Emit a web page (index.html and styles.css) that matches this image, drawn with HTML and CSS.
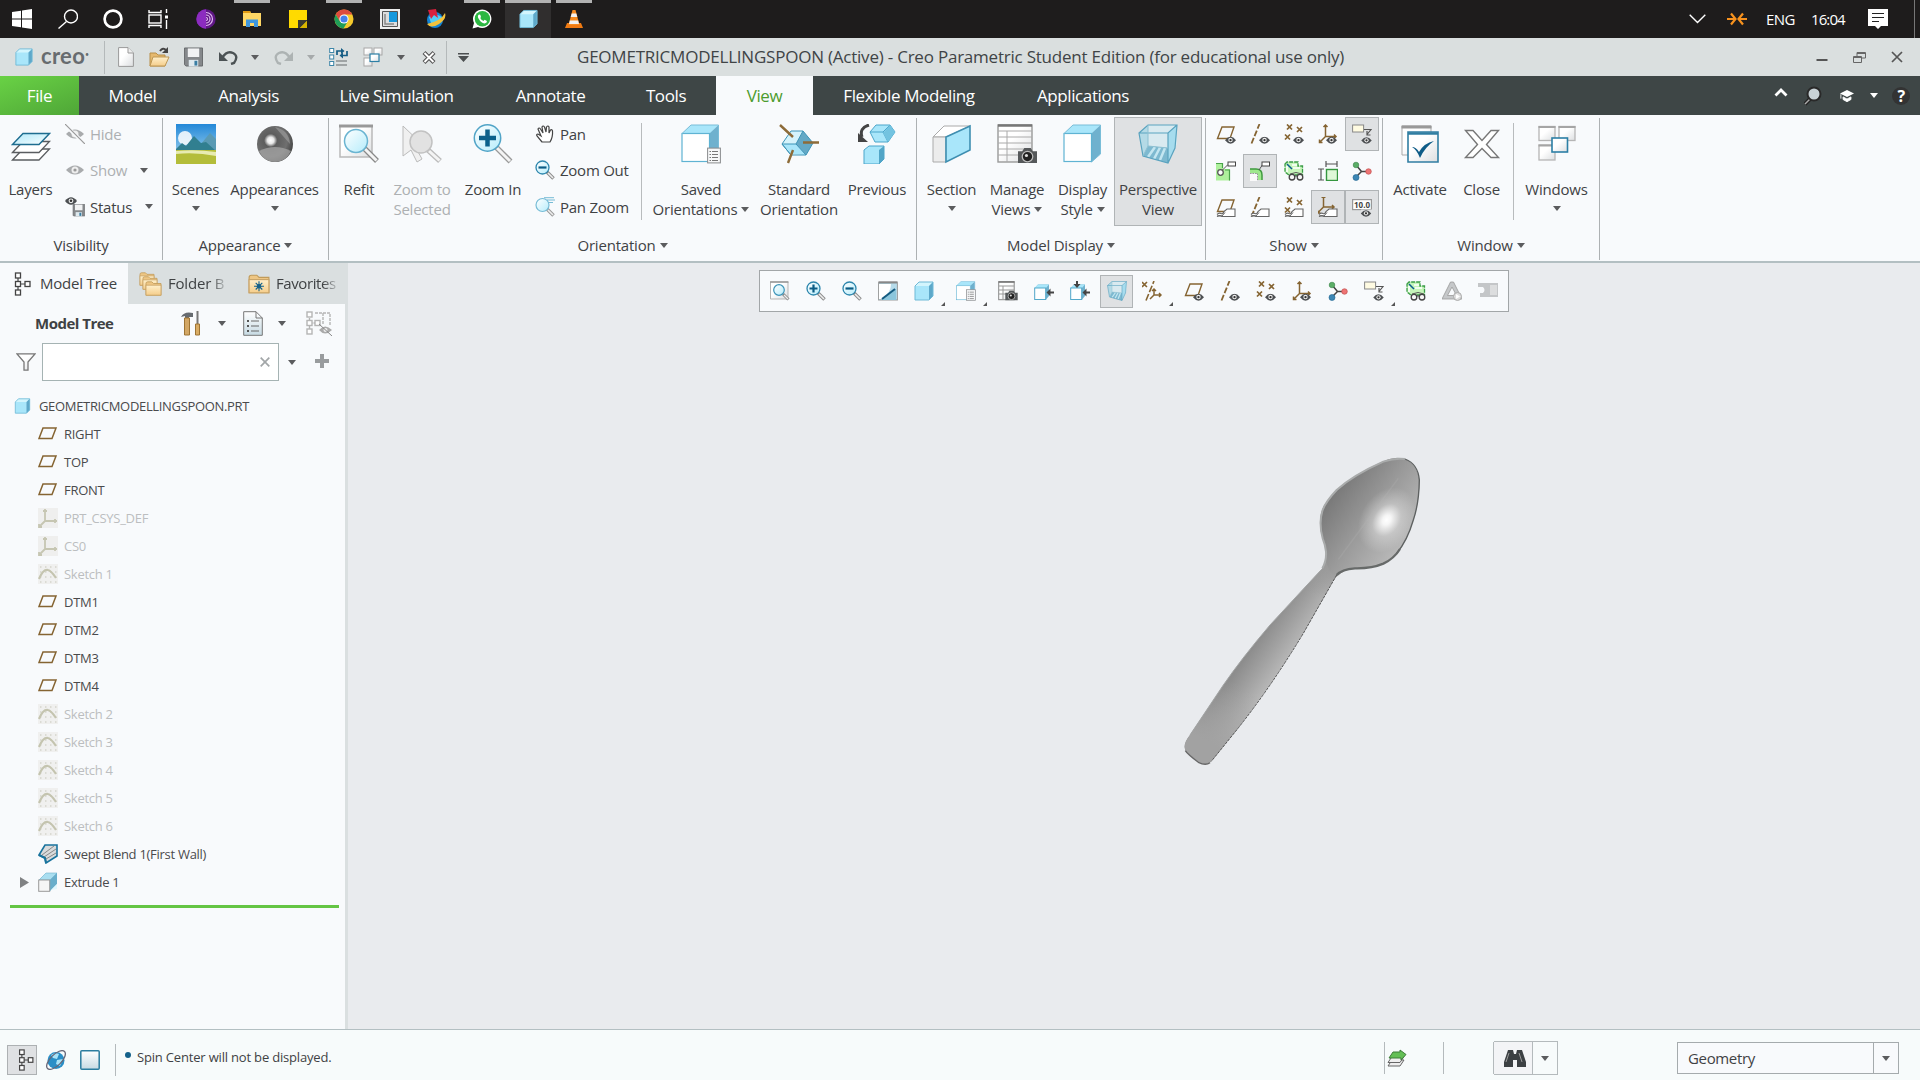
FILE: index.html
```
<!DOCTYPE html>
<html lang="en">
<head>
<meta charset="utf-8">
<title>Creo Parametric</title>
<link rel="stylesheet" href="styles.css">
</head>
<body>
<svg class="sprite" aria-hidden="true">
<defs>
<linearGradient id="gPaper" x1="0" y1="0" x2="1" y2="1"><stop offset=".4" stop-color="#fff"/><stop offset="1" stop-color="#dcdee0"/></linearGradient>
<linearGradient id="gLens" x1="0" y1="0" x2="1" y2="1"><stop offset="0" stop-color="#fff"/><stop offset="1" stop-color="#b5ecfb"/></linearGradient>
<linearGradient id="gSky" x1="0" y1="0" x2="0" y2="1"><stop offset="0" stop-color="#2388d8"/><stop offset="1" stop-color="#b9e2f3"/></linearGradient>
<linearGradient id="gGold" x1="0" y1="0" x2="0" y2="1"><stop offset="0" stop-color="#fff0cc"/><stop offset="1" stop-color="#f5cd8a"/></linearGradient>
<linearGradient id="gSq" x1="0" y1="0" x2="0" y2="1"><stop offset="0" stop-color="#fff"/><stop offset="1" stop-color="#c7dae3"/></linearGradient>
<radialGradient id="gBall" cx=".38" cy=".4" r=".65"><stop offset="0" stop-color="#fff"/><stop offset=".14" stop-color="#e8e8e8"/><stop offset=".28" stop-color="#5d5d5d"/><stop offset=".7" stop-color="#6f6f6f"/><stop offset="1" stop-color="#444"/></radialGradient>
<linearGradient id="gFlow" x1="0" y1="0" x2="1" y2="1"><stop offset="0" stop-color="#b4e9f9"/><stop offset=".5" stop-color="#d4f3fc"/><stop offset="1" stop-color="#fff"/></linearGradient>

<symbol id="eye" viewBox="0 0 12 8"><path d="M0 4Q6-3.500 12 4Q6 11.500 0 4Z" fill="#4c4f52"/><circle cx="6" cy="3.800" r="2.400" fill="#eee"/><circle cx="6" cy="3.800" r="1.300" fill="#333"/></symbol>
<symbol id="tag" viewBox="0 0 20 10"><path d="M1 7Q3 5 5 6T8 4L11 1.500H19V9H6Q4 7 1 9" fill="#fff" stroke="#666" stroke-width="1.100"/><path d="M1 8.500H6L9 5" fill="none" stroke="#666" stroke-width="1"/></symbol>
<symbol id="cube" viewBox="0 0 20 20"><path d="M1 5L5 1H19V15L15 19H1Z" fill="#a9e6fa"/><path d="M1 5L5 1H19L15 5Z" fill="#d3f5fd"/><path d="M15 5L19 1V15L15 19Z" fill="#5ea8c9"/><path d="M1 5L5 1H19V15L15 19H1Z" fill="none" stroke="#6fb9d6"/></symbol>
<symbol id="mag" viewBox="0 0 20 20"><path d="M12 12L18.500 18.500" stroke="#8b8b8b" stroke-width="3.600"/><path d="M13 13L18 18" stroke="#eee" stroke-width="1.600"/><circle cx="7.500" cy="7.500" r="6.500" fill="url(#gLens)" stroke="#2d86ad" stroke-width="1.300"/></symbol>
<symbol id="zin" viewBox="0 0 20 20"><use href="#mag"/><path d="M3.500 7.500H11.500M7.500 3.500V11.500" stroke="#0b5c85" stroke-width="2.200"/></symbol>
<symbol id="zout" viewBox="0 0 20 20"><use href="#mag"/><path d="M3.500 7.500H11.500" stroke="#0b5c85" stroke-width="2.200"/></symbol>
<symbol id="refit" viewBox="0 0 20 20"><path d="M.5 1H18V18H.5Z" fill="url(#gPaper)" stroke="#b5b5b5"/><path d="M0 1H18.500" stroke="#999" stroke-width="1.500"/><path d="M13 13L18.500 18.500" stroke="#8b8b8b" stroke-width="3"/><path d="M14 14L18 18" stroke="#eee" stroke-width="1.200"/><circle cx="9" cy="9" r="5.300" fill="url(#gLens)" stroke="#3c94b8" stroke-width="1.200"/></symbol>
<symbol id="plane" viewBox="0 0 20 20"><path d="M1 14.500L5 4H18L14 14.500Z" fill="none" stroke="#856432" stroke-width="1.500"/></symbol>
<symbol id="pl" viewBox="0 0 20 20"><path d="M1.500 14.500L6 3H18L14 14.500Z" fill="none" stroke="#856432" stroke-width="1.400"/></symbol>
<symbol id="ax" viewBox="0 0 20 20"><path d="M1.500 19.500L9.500 0" stroke="#856432" stroke-width="1.800" stroke-dasharray="6 2"/></symbol>
<symbol id="pts" viewBox="0 0 20 20"><path d="M3 .5L8 5.500M8 .5L3 5.500M13 3L18 8M18 3L13 8M1 10.500L6 15.500M6 10.500L1 15.500" stroke="#856432" stroke-width="1.700"/></symbol>
<symbol id="cs" viewBox="0 0 20 20"><path d="M7.500 1V12.500H18M7.500 12.500L1.500 18.500M5.500 3L7.500 1L9.500 3M16 10.500L18 12.500L16 14.500M1.500 15.500V18.500H4.500" fill="none" stroke="#856432" stroke-width="1.500"/></symbol>
<symbol id="pl-e" viewBox="0 0 20 20"><use href="#pl"/><use href="#eye" x="9" y="12.500" width="11" height="7.500"/></symbol>
<symbol id="ax-e" viewBox="0 0 20 20"><use href="#ax"/><use href="#eye" x="9" y="12.500" width="11" height="7.500"/></symbol>
<symbol id="pts-e" viewBox="0 0 20 20"><use href="#pts"/><use href="#eye" x="9" y="12.500" width="11" height="7.500"/></symbol>
<symbol id="cs-e" viewBox="0 0 20 20"><use href="#cs"/><use href="#eye" x="8" y="12.500" width="11" height="7.500"/></symbol>
<symbol id="an-e" viewBox="0 0 20 20"><rect x=".6" y="1" width="11" height="7" fill="#fffbe2" stroke="#888"/><path d="M12 5.500H19L15 10.500M15 7V11H18.500" fill="none" stroke="#555" stroke-width="1.200"/><use href="#eye" x="9" y="13" width="11" height="7"/></symbol>
<symbol id="pl-t" viewBox="0 0 20 20"><use href="#pl"/><use href="#tag" x="0" y="10.500" width="20" height="10"/></symbol>
<symbol id="ax-t" viewBox="0 0 20 20"><use href="#ax"/><use href="#tag" x="0" y="10.500" width="20" height="10"/></symbol>
<symbol id="pts-t" viewBox="0 0 20 20"><use href="#pts"/><use href="#tag" x="0" y="10.500" width="20" height="10"/></symbol>
<symbol id="cs-t" viewBox="0 0 20 20"><use href="#cs" x="-2" y="-2.500"/><use href="#tag" x="0" y="10.500" width="20" height="10"/></symbol>
<symbol id="num" viewBox="0 0 20 20"><rect x=".6" y="2.600" width="18.800" height="10" fill="#fff" stroke="#999" stroke-width="1.200"/><text x="10" y="10.800" text-anchor="middle" font-size="8" font-weight="700" font-family="Open Sans, sans-serif" fill="#444">10.0</text><rect x="9" y="12.500" width="11" height="7.500" fill="#dfe1e3"/><use href="#eye" x="8.500" y="13" width="11" height="7"/></symbol>
<symbol id="gnote" viewBox="0 0 20 20"><path d="M0 2H7V8H14V19.500H0Z" fill="#aef09c"/><path d="M0 2.500H6.500V7M9 9H13.500V19.500" fill="none" stroke="#4aa34a" stroke-width="1.200"/><circle cx="4.500" cy="11.500" r="2.800" fill="#fff" stroke="#555" stroke-width="1.300"/><path d="M6.500 9L12 3.500" stroke="#555"/><rect x="12" y="1" width="7.500" height="4" fill="#fff" stroke="#444"/></symbol>
<symbol id="gsurf" viewBox="0 0 20 20"><path d="M0 8H6Q12 8 12 14V19H8V14H5V12H0Z" fill="#9ee88c"/><path d="M0 8H6Q12 8 12 14V19" fill="none" stroke="#3f9a3f" stroke-width="1.500"/><rect x="0" y="13" width="7" height="7" fill="#fafafa"/><path d="M0 12.500H7.500V20" fill="none" stroke="#999" stroke-dasharray="1.500 1"/><path d="M9 9L13 3" stroke="#555"/><rect x="12" y="1" width="7.500" height="4" fill="#fff" stroke="#444"/></symbol>
<symbol id="glass" viewBox="0 0 20 20"><path d="M1 3L3 1H14V5H18.500V14H5L1 11Z" fill="#c6f5ba" stroke="#3a9c46" stroke-width="1.300" stroke-dasharray="4 1"/><path d="M8 4H13M9 7H16M3 5V11" stroke="#fff" stroke-width="1.500"/><path d="M3 3L8 8" stroke="#0c5d8e" stroke-width="1.500"/><path d="M6 13Q12 10 18 13" fill="none" stroke="#555"/><circle cx="8" cy="16.200" r="2.800" fill="#f8f8f8" stroke="#444" stroke-width="1.300"/><circle cx="16" cy="16.200" r="2.800" fill="#f8f8f8" stroke="#444" stroke-width="1.300"/><path d="M10.500 15H13.500" stroke="#444"/></symbol>
<symbol id="dimn" viewBox="0 0 20 20"><rect x="8.500" y="8.500" width="11" height="11" fill="#dff8d8" stroke="#35963f" stroke-width="1.400"/><path d="M8 3H19M8 0V6M19 0V6M3 8V19M0 8H6M0 19H6" stroke="#555" stroke-width="1.200"/></symbol>
<symbol id="spin" viewBox="0 0 20 20"><path d="M4 4L9.500 10.500H16M9.500 10.500L4 16" fill="none" stroke="#444" stroke-width="1.500"/><circle cx="4" cy="4" r="2.800" fill="#5cae68" stroke="#388246" stroke-width=".6"/><circle cx="16.500" cy="10.500" r="2.800" fill="#ee7474" stroke="#b94444" stroke-width=".6"/><circle cx="4" cy="16.500" r="3" fill="#3d87b5" stroke="#1c638f" stroke-width=".6"/></symbol>
<symbol id="persp" viewBox="0 0 40 40"><path d="M1 9L10 1H39L30 9Z" fill="#d3e9ef"/><path d="M1 9L10 1V22L5 32Z" fill="#b4dae6"/><path d="M10 1H39V21L30 24L10 22Z" fill="#d9eaf0"/><path d="M30 9L39 1L37 24L30 39Z" fill="#a6dcee"/><path d="M5 32L10 22L30 24V39Z" fill="#7db9d0"/><path d="M10 33L17 23M16 35L22 23.500M22 36L27 24" stroke="#c3e6f1" stroke-width="2.500"/><path d="M1 9L10 1H39L37 24L30 39L5 32ZM1 9H30L39 1M30 9V39" fill="none" stroke="#5aa3bf" stroke-width="1.200"/><path d="M10 1V22L5 32M10 22L30 24" fill="none" stroke="#8cc0d2"/></symbol>
<symbol id="cam" viewBox="0 0 18 16"><path d="M0 4H4L6 1H12L14 4H18V15H0Z" fill="#55585a"/><circle cx="9" cy="9" r="5" fill="#222" stroke="#bbb" stroke-width="1.200"/><circle cx="8" cy="8" r="1.500" fill="#ddd"/></symbol>
<symbol id="table" viewBox="0 0 36 40"><rect x="1" y="1" width="34" height="37" fill="url(#gPaper)" stroke="#999" stroke-width="1.400"/><path d="M1 1.500H35" stroke="#777" stroke-width="2.400"/><path d="M1 7H35M1 13H35M1 19H35M1 25H35M1 31H35M10 7V38" stroke="#aaa"/></symbol>
<symbol id="tablecam" viewBox="0 0 40 40"><use href="#table" width="36" height="40"/><use href="#cam" x="21" y="23" width="19" height="17"/></symbol>
<symbol id="tablecam-s" viewBox="0 0 20 20"><rect x=".7" y=".7" width="15.500" height="18" fill="url(#gPaper)" stroke="#888"/><path d="M.5 1H16.500" stroke="#777" stroke-width="1.600"/><path d="M1 5H16M1 9H16M1 13H16M5 5V18" stroke="#999"/><use href="#cam" x="7" y="9" width="13" height="11"/></symbol>
<symbol id="box" viewBox="0 0 40 40"><path d="M1 9.500L10 1H37.500L29 9.500Z" fill="#a9e6fa"/><path d="M28.500 9.500L37.500 1V30L28.500 38Z" fill="#6fb1ce"/><rect x="1" y="9.500" width="27.500" height="28" fill="#fff" stroke="#5fb3d3" stroke-width="1.200"/><path d="M1 9.500L10 1H37.500V30L28.500 38" fill="none" stroke="#79bdd8"/></symbol>
<symbol id="list" viewBox="0 0 14 16"><rect x=".6" y=".6" width="12.800" height="14.800" fill="#f6f7f8" stroke="#8a8c8e"/><path d="M2.500 4H11.500M2.500 7H11.500M2.500 10H11.500M2.500 13H11.500" stroke="#777" stroke-dasharray="1.500 1 6 1"/></symbol>
<symbol id="saved" viewBox="0 0 40 40"><use href="#box"/><use href="#list" x="26" y="23" width="14" height="17"/></symbol>
<symbol id="win" viewBox="0 0 20 20"><rect x="1" y="1" width="8" height="7" fill="url(#gPaper)" stroke="#a8a8a8"/><rect x="11" y="1" width="8" height="7" fill="url(#gPaper)" stroke="#a8a8a8"/><rect x="1" y="11" width="8" height="8" fill="url(#gPaper)" stroke="#a8a8a8"/><rect x="7" y="7" width="9" height="7.500" fill="url(#gPaper)" stroke="#2c7fa5" stroke-width="1.200"/></symbol>
<symbol id="floppy" viewBox="0 0 20 20"><path d="M.5 .5H19.500V19.500H2L.5 18Z" fill="#85888b" stroke="#66696b"/><rect x="4" y="1" width="12" height="9" fill="#f1f2f3"/><rect x="5" y="13" width="10" height="7" fill="#dfe9ee"/><rect x="11" y="14" width="3" height="5" fill="#3a7ea3"/></symbol>
<symbol id="tree" viewBox="0 0 16 24"><path d="M3.500 3V21M3.500 12H13" stroke="#444" stroke-width="1.200"/><g fill="#fff" stroke="#444" stroke-width="1.300"><rect x="1" y="1" width="5" height="5"/><rect x="1" y="9.500" width="5" height="5"/><rect x="1" y="18" width="5" height="5"/><rect x="10.500" y="9.500" width="5" height="5"/></g></symbol>
<symbol id="sketch" viewBox="0 0 20 20"><rect width="20" height="20" fill="#f0f0ef"/><path d="M2 3H20M2 8H20M2 13H20M2 18H20" stroke="#d4d4cc" stroke-width="1.500" stroke-dasharray="1.500 3.500"/><path d="M1 15Q5 5 10 6Q13 6.500 18 14" fill="none" stroke="#c4c4af" stroke-width="2.200"/></symbol>
<symbol id="csg" viewBox="0 0 20 20"><rect width="20" height="20" fill="#efefee"/><path d="M7 1V13H19M7 13L1.500 18.500M5 3H9M17 11V15M1 16V19H4" fill="none" stroke="#c6c6b2" stroke-width="1.800"/></symbol>
<symbol id="folder" viewBox="0 0 20 18"><path d="M1 3Q1 1 3 1H8L10 3H19V17H1Z" fill="#eec684" stroke="#c19b5a"/><rect x="1" y="5" width="18" height="12" fill="url(#gGold)" stroke="#c9a467"/></symbol>
<symbol id="caret" viewBox="0 0 8 5"><path d="M0 0H8L4 5Z" fill="#5b5c5e"/></symbol>
<symbol id="corner" viewBox="0 0 4 4"><path d="M4 0V4H0Z" fill="#555"/></symbol>
<symbol id="boxarrow" viewBox="0 0 20 20"><path d="M.7 7L4 3.500H15V15L12 18.500H.7Z" fill="#6fb1ce"/><path d="M.7 7L4 3.500H15L12 7Z" fill="#a9e6fa"/><rect x=".7" y="7" width="11" height="11.500" fill="#fff" stroke="#55a9ca"/><path d="M20 11.500H14" stroke="#444" stroke-width="2"/><path d="M12.500 11.500L16.500 7.500V15.500Z" fill="#444"/></symbol>
</defs>
</svg>

<header class="taskbar">
  <div class="tb sys"><svg width="20" height="20" viewBox="0 0 20 20"><path d="M0 3L9 1.700V9.500H0ZM10 1.500L20 0V9.500H10ZM0 10.500H9V18.300L0 17ZM10 10.500H20V20L10 18.500Z" fill="#fff"/></svg></div>
  <div class="tb sys"><svg width="20" height="20" viewBox="0 0 20 20" fill="none" stroke="#fff" stroke-width="1.400"><circle cx="13" cy="7.500" r="6.500"/><path d="M8.500 12.500L.5 19.500"/></svg></div>
  <div class="tb sys"><svg width="20" height="20" viewBox="0 0 20 20"><circle cx="10" cy="10" r="8.400" fill="none" stroke="#fff" stroke-width="2.700"/></svg></div>
  <div class="tb sys last"><svg width="20" height="20" viewBox="0 0 20 20" fill="none" stroke="#fff" stroke-width="1.400"><path d="M1 1V3.500H13V1M1 19V16.500H13V19"/><rect x="1" y="6" width="12" height="8"/><path d="M18.500 0V4M18.500 11V20"/><path d="M17 8H20" stroke-width="3"/></svg></div>
  <div class="tb"><svg width="20" height="20" viewBox="0 0 20 20"><circle cx="10" cy="10" r="9.700" fill="#5f1785"/><path d="M10 .3A9.700 9.700 0 0 0 10 19.700Z" fill="#8c2cc0"/><path d="M10 3.500A6.500 6.500 0 0 1 10 16.500M10 6A4 4 0 0 1 10 14M10 8.500A1.500 1.500 0 0 1 10 11.500" fill="none" stroke="#e2b9f2" stroke-width="1.200"/></svg></div>
  <div class="tb open"><svg width="20" height="20" viewBox="0 0 20 20"><path d="M1 2H8L9 4H19V17H1Z" fill="#ffd765"/><path d="M1 2H8L9 4H1Z" fill="#e19b14"/><path d="M4 18V10.500H16V18H12V14H8V18Z" fill="#3f97dd"/></svg></div>
  <div class="tb"><svg width="20" height="20" viewBox="0 0 20 20"><path d="M1 1H19V19H1Z" fill="#ffda00"/><path d="M10 19V11H19V12L12 19Z" fill="#3a3a30"/><path d="M19 12L12 19H19Z" fill="#d7b400"/></svg></div>
  <div class="tb open"><svg width="20" height="20" viewBox="0 0 20 20"><circle cx="10" cy="10" r="9.500" fill="#f5c92c"/><path d="M1.700 5.400A9.500 9.500 0 0 1 18.300 5.400H10L6 12.500Z" fill="#dd4b3e"/><path d="M1.700 5.400A9.500 9.500 0 0 0 9.500 19.500L13.700 12.500H6Z" fill="#1f9d58"/><circle cx="10" cy="10" r="4.600" fill="#fff"/><circle cx="10" cy="10" r="3.600" fill="#4580ea"/></svg></div>
  <div class="tb"><svg width="20" height="20" viewBox="0 0 20 20"><path d="M0 0H20V20H0Z" fill="#eee"/><path d="M2.500 2.500H17.500V17.500H2.500Z" fill="#ddd" stroke="#555"/><path d="M9 3H17V13H9Z" fill="#1598dd"/><path d="M5 5V15H14" fill="none" stroke="#888" stroke-width="1.500"/></svg></div>
  <div class="tb"><svg width="20" height="20" viewBox="0 0 20 20"><circle cx="9" cy="11" r="8" fill="#1283d6"/><path d="M3 8Q9 3 16 8L13 13L6 17Z" fill="#55cdf5"/><path d="M1 15Q5 20 13 15T19 4Q15 12 1 15" fill="#f2c23c"/><path d="M2 1L10 0L12 9L8 6L5 10Z" fill="#d9203e"/></svg></div>
  <div class="tb open"><svg width="20" height="20" viewBox="0 0 20 20"><path d="M.5 19.500L2 14A9.200 9.200 0 1 1 6 18Z" fill="#fff"/><circle cx="10.400" cy="9.800" r="7.700" fill="#2cb742"/><path d="M7 5.500Q5 7 6.500 9.500Q9 14 12.500 14.500Q15 14 15 12L12.500 10.800L11.500 12Q9 11 8.300 9L9 8L8.300 5.700Z" fill="#fff"/></svg></div>
  <div class="tb active"><svg width="19" height="20"><use href="#cube"/></svg></div>
  <div class="tb open"><svg width="20" height="20" viewBox="0 0 20 20"><path d="M3 14H17L19 19H1Z" fill="#f07a12"/><path d="M8.500 1H11.500L15.500 16H4.500Z" fill="#f58a1f"/><path d="M7.700 4.500H12.300L13.300 8H6.700ZM5.800 11.500H14.200L15 15H5Z" fill="#f1f1f1"/></svg></div>
  <div class="tray">
    <svg width="17" height="10" viewBox="0 0 17 10"><path d="M.7 .7L8.500 8.500L16.300 .7" fill="none" stroke="#fff" stroke-width="1.400"/></svg>
    <svg class="orange" width="20" height="14" viewBox="0 0 20 14"><path d="M0 7H7M13 7H20M4 1.500L8.500 7L4 12.500M16 1.500L11.500 7L16 12.500" fill="none" stroke="#f7921e" stroke-width="2.200"/></svg>
    <span class="lang">ENG</span><span class="clock">16:04</span>
    <svg class="note" width="20" height="20" viewBox="0 0 20 20"><path d="M0 0H20V17H13L10 20L7 17H0Z" fill="#fff"/><path d="M4 4.500H16M4 8.500H16M4 12.500H11" stroke="#222" stroke-width="1.200"/></svg>
  </div>
</header>

<div class="titlebar">
  <svg width="18" height="20"><use href="#cube"/></svg>
  <span class="brand">creo<i>•</i></span>
  <span class="sep"></span>
  <svg class="n" width="16" height="20" viewBox="0 0 16 20"><path d="M.6 .6H10L15.400 6V19.400H.6Z" fill="url(#gPaper)" stroke="#999"/><path d="M10 .6V6H15.400" fill="#eee" stroke="#999"/></svg>
  <svg width="21" height="20" viewBox="0 0 21 20"><path d="M1 6H7L9 8H16V19H1Z" fill="#e5b96f" stroke="#b98f49"/><path d="M4 10H20L16 19H1Z" fill="url(#gGold)" stroke="#bd9754"/><path d="M11 4Q14 0 17 3" fill="none" stroke="#444" stroke-width="2"/><path d="M19 0V6H13Z" fill="#444"/></svg>
  <svg width="19" height="20"><use href="#floppy"/></svg>
  <svg width="20" height="16" viewBox="0 0 20 16"><path d="M4 9Q9 1 15 4T16 14L13 15" fill="none" stroke="#4b5254" stroke-width="2.400"/><path d="M1 3V12H10Z" fill="#4b5254"/></svg>
  <svg width="8" height="5"><use href="#caret"/></svg>
  <svg width="20" height="16" viewBox="0 0 20 16"><path d="M16 9Q11 1 5 4T4 14L7 15" fill="none" stroke="#adb3b3" stroke-width="2.400"/><path d="M19 3V12H10Z" fill="#adb3b3"/></svg>
  <svg class="dim" width="8" height="5"><use href="#caret"/></svg>
  <svg width="20" height="20" viewBox="0 0 20 20"><g fill="#fff" stroke="#3d86a8"><rect x=".7" y="1.500" width="4" height="4"/><rect x=".7" y="8" width="4" height="4"/><rect x=".7" y="14.500" width="4" height="4"/></g><path d="M7 14H18M7 18H18" stroke="#8c9192" stroke-width="1.500"/><path d="M8 8V4H12M18 4V8.500H14" fill="none" stroke="#155d85" stroke-width="1.700"/><path d="M12 1L15.500 4L12 7ZM14 5.500L10.500 8.500L14 11.500Z" fill="#155d85"/></svg>
  <svg width="20" height="20"><use href="#win"/></svg>
  <svg width="8" height="5"><use href="#caret"/></svg>
  <svg class="n" width="14" height="13" viewBox="0 0 14 13"><path d="M2 1.500L12 11.500M12 1.500L2 11.500" stroke="#555" stroke-width="4.200"/><path d="M2.500 2L11.500 11M11.500 2L2.500 11" stroke="#fff" stroke-width="1.900"/></svg>
  <span class="sep"></span>
  <svg width="11" height="9" viewBox="0 0 11 9"><path d="M0 0H11V1.500H0ZM0 3H11L5.500 9Z" fill="#4b4f50"/></svg>
  <span class="title">GEOMETRICMODELLINGSPOON (Active) - Creo Parametric Student Edition (for educational use only)</span>
  <svg width="12" height="12" viewBox="0 0 12 12"><path d="M.5 9H11.500" stroke="#555" stroke-width="2"/></svg>
  <svg width="13" height="11" viewBox="0 0 13 11"><g fill="none" stroke="#666"><path d="M4 4V.5H12.500V6H9"/><path d="M.5 4.500H8.500V10.500H.5Z"/><path d="M4 1.500H12.500M.5 5.500H8.500"/></g></svg>
  <svg width="12" height="12" viewBox="0 0 12 12"><path d="M1 1L11 11M11 1L1 11" stroke="#555" stroke-width="1.700"/></svg>
</div>

<nav class="menu">
  <span class="file">File</span><span>Model</span><span>Analysis</span><span>Live Simulation</span><span>Annotate</span><span>Tools</span><span class="on">View</span><span>Flexible Modeling</span><span>Applications</span>
  <div class="mright">
    <svg width="14" height="9" viewBox="0 0 14 9"><path d="M1.500 7.500L7 2L12.500 7.500" fill="none" stroke="#fff" stroke-width="2.800"/></svg>
    <svg width="18" height="20" viewBox="0 0 18 20"><path d="M6 13L1 18" stroke="#222" stroke-width="4"/><path d="M6 13L1 18" stroke="#aaa" stroke-width="1.500"/><circle cx="10" cy="8" r="6.500" fill="#c8d2d6" stroke="#292929" stroke-width="2"/></svg>
    <svg width="16" height="14" viewBox="0 0 18 16"><path d="M9 1L17 5L9 9L1 5Z" fill="#fff"/><path d="M4.500 9L9 11.500L13.500 9V12L9 14.500L4.500 12ZM2 6V11" fill="#fff" stroke="#fff"/></svg>
    <svg class="white" width="8" height="5"><use href="#caret"/></svg>
    <span class="help">?</span>
  </div>
</nav>

<section class="ribbon">
  <div class="group g1"><div class="row">
    <div class="btn"><svg width="40" height="40" viewBox="0 0 40 40"><g fill="#fff" stroke="#5a5d60" stroke-width="1.300"><path d="M1.500 36L12 25H38.500L28 36Z"/><path d="M1.500 28.500L12 17.500H38.500L28 28.500Z"/></g><path d="M1.500 20.500L12 9.500H38.500L28 20.500Z" fill="url(#gFlow)" stroke="#1e6d90" stroke-width="1.400"/></svg><span>Layers</span></div>
    <div class="stack">
      <div class="off"><svg width="20" height="20" viewBox="0 0 20 20"><path d="M1 10Q10 1 19 10Q10 19 1 10Z" fill="#a9abad"/><circle cx="10" cy="10" r="3.500" fill="#eee"/><path d="M0 1L20 20" stroke="#f8fafc" stroke-width="3.500"/><path d="M0 0L20 20" stroke="#999" stroke-width="1.200"/></svg>Hide</div>
      <div class="off"><svg width="20" height="20" viewBox="0 0 20 20"><path d="M1 10Q10 1 19 10Q10 19 1 10Z" fill="#a9abad"/><circle cx="10" cy="10" r="3.500" fill="#eee"/><circle cx="10" cy="10" r="1.600" fill="#999"/></svg>Show<svg class="c far" width="8" height="5"><use href="#caret"/></svg></div>
      <div><svg width="20" height="20" viewBox="0 0 20 20"><use href="#eye" width="12" height="8"/><use href="#floppy" x="7.500" y="7" width="12.500" height="12.500"/></svg>Status<svg class="c far2" width="8" height="5"><use href="#caret"/></svg></div>
    </div></div><div class="gl">Visibility</div></div>
  <div class="group g2"><div class="row">
    <div class="btn"><svg width="40" height="40" viewBox="0 0 40 40"><rect width="40" height="40" fill="url(#gSky)"/><circle cx="9" cy="14" r="7" fill="#fff" opacity=".85"/><path d="M20 26L34 9L40 15V27Z" fill="#5a9ab4"/><path d="M0 25L6 19L10 22L18 12L25 19L30 18L40 27H0Z" fill="#317f90"/><rect y="26" width="40" height="14" fill="#b4bd3a"/><path d="M0 27Q20 25 40 28V32Q20 28 0 30Z" fill="#e7ebb2"/></svg><span>Scenes</span><svg class="c" width="8" height="5"><use href="#caret"/></svg></div>
    <div class="btn"><svg width="40" height="40" viewBox="0 0 40 40"><circle cx="20" cy="20" r="18" fill="url(#gBall)"/><path d="M4 27Q20 19 36 27Q31 38 20 38T4 27Z" fill="#a6a6a6" opacity=".75"/><path d="M20 3Q34 6 35 20Q28 12 20 3Z" fill="#999" opacity=".7"/></svg><span>Appearances</span><svg class="c" width="8" height="5"><use href="#caret"/></svg></div>
    </div><div class="gl">Appearance<svg class="c" width="8" height="5"><use href="#caret"/></svg></div></div>
  <div class="group g3"><div class="row">
    <div class="btn"><svg width="40" height="40" viewBox="0 0 40 40"><path d="M1 2H33V33H1Z" fill="url(#gPaper)" stroke="#b9b9b9" stroke-width="1.500"/><path d="M0 2H34" stroke="#999" stroke-width="3"/><path d="M25 24L38 37" stroke="#888" stroke-width="5.500"/><path d="M26 25L37.500 36.500" stroke="#f4f4f4" stroke-width="3"/><circle cx="17" cy="17" r="11.500" fill="url(#gLens)" stroke="#6ab4d1" stroke-width="1.500"/></svg><span>Refit</span></div>
    <div class="btn off"><svg width="40" height="40" viewBox="0 0 40 40"><path d="M1 2V32L9 26L15 38L20 35L14 24L22 22Z" fill="#f0f0f0" stroke="#bbb"/><path d="M26 26L38 37" stroke="#bbb" stroke-width="5.500"/><path d="M27 27L37.500 36.500" stroke="#f4f4f4" stroke-width="3"/><circle cx="19" cy="18" r="11" fill="#e2e2e2" stroke="#c2c2c2" stroke-width="1.500"/></svg><span>Zoom to<br>Selected</span></div>
    <div class="btn"><svg width="40" height="40" viewBox="0 0 40 40"><path d="M23 23L37.500 37.500" stroke="#999" stroke-width="5.500"/><path d="M24 24L37 37" stroke="#f4f4f4" stroke-width="3"/><circle cx="14.500" cy="14" r="13.200" fill="url(#gLens)" stroke="#51a4c7" stroke-width="1.500"/><path d="M6 14H23M14.500 5.500V22.500" stroke="#0b618b" stroke-width="4.500"/></svg><span>Zoom In</span></div>
    <div class="stack">
      <div><svg width="20" height="20" viewBox="0 0 20 20"><path d="M7 18L2 12Q1 10 3 10L6 12L3 5Q4 3 5.500 5L8 9L7 3Q8 1 9.500 3L11 8L11.500 3Q13 1 14 3V9L15.500 6Q17 5 17.500 7Q18 13 15 18Z" fill="#fff" stroke="#444" stroke-width="1.200"/></svg>Pan</div>
      <div><svg width="20" height="20"><use href="#zout"/></svg>Zoom Out</div>
      <div><svg width="20" height="20" viewBox="0 0 20 20"><path d="M12 12L18.500 18.500" stroke="#999" stroke-width="3.600"/><path d="M13 13L18 18" stroke="#eee" stroke-width="1.600"/><circle cx="7.500" cy="8" r="6.500" fill="url(#gLens)" stroke="#77bcd6" stroke-width="1.200"/><path d="M9 .7H19M12 3H20M13 5.500H18" stroke="#77bcd6"/></svg>Pan Zoom</div>
    </div>
    <i class="vsep"></i>
    <div class="btn"><svg width="40" height="40"><use href="#saved"/></svg><span>Saved<br>Orientations<svg class="c" width="8" height="5"><use href="#caret"/></svg></span></div>
    <div class="btn"><svg width="40" height="40" viewBox="0 0 40 40"><path d="M3 20L12 7L24 7L17 20Z" fill="#d5f3fb"/><path d="M3 20H17L27 31L12 30Z" fill="#a9e6fa"/><path d="M24 7L34 19L27 31L17 20Z" fill="#64a9c6"/><path d="M3 20L12 7H24L34 19L27 31H12ZM3 20H17L24 7M17 20L27 31M3 20L12 31" fill="none" stroke="#3d94b7"/><path d="M1 1L14 13M24 18.500H40M14 26L9 39" stroke="#8d6b38" stroke-width="2.400"/></svg><span>Standard<br>Orientation</span></div>
    <div class="btn"><svg width="40" height="40" viewBox="0 0 40 40"><path d="M13 8L19 1H33L38 8L31 18H18Z" fill="#a9e6fa" stroke="#4ba5ca"/><path d="M13 8H26L31 18M26 8L33 1" fill="none" stroke="#4ba5ca"/><path d="M33 1L38 8L31 18L26 9Z" fill="#73c3e0"/><path d="M7 26L12 22H27V35L22 40H7Z" fill="#a9e6fa" stroke="#4ba5ca"/><path d="M22 26L27 22V35L22 40Z" fill="#52a5c7"/><path d="M12 1Q2 4 5 13" fill="none" stroke="#444" stroke-width="3"/><path d="M1 9V18H11Z" fill="#444"/></svg><span>Previous</span></div>
    </div><div class="gl">Orientation<svg class="c" width="8" height="5"><use href="#caret"/></svg></div></div>
  <div class="group g4"><div class="row">
    <div class="btn"><svg width="40" height="40" viewBox="0 0 40 40"><path d="M1 13L12 2H38L14 13Z" fill="#fff" stroke="#aaa"/><path d="M1 13H14V38H1Z" fill="#ececec" stroke="#aaa"/><path d="M14 13L38 2V26L14 38Z" fill="#a9e6fa" stroke="#3f8fb1" stroke-width="1.600"/></svg><span>Section</span><svg class="c" width="8" height="5"><use href="#caret"/></svg></div>
    <div class="btn"><svg width="40" height="40"><use href="#tablecam"/></svg><span>Manage<br>Views<svg class="c" width="8" height="5"><use href="#caret"/></svg></span></div>
    <div class="btn disp"><svg width="40" height="40"><use href="#box"/></svg><span>Display<br>Style<svg class="c" width="8" height="5"><use href="#caret"/></svg></span></div>
    <div class="btn sel"><svg width="40" height="40"><use href="#persp"/></svg><span>Perspective<br>View</span></div>
    </div><div class="gl">Model Display<svg class="c" width="8" height="5"><use href="#caret"/></svg></div></div>
  <div class="group g5"><div class="row cells">
    <b><svg><use href="#pl-e"/></svg></b><b><svg><use href="#ax-e"/></svg></b><b><svg><use href="#pts-e"/></svg></b><b><svg><use href="#cs-e"/></svg></b><b class="sel"><svg><use href="#an-e"/></svg></b>
    <b><svg><use href="#gnote"/></svg></b><b class="sel"><svg><use href="#gsurf"/></svg></b><b><svg><use href="#glass"/></svg></b><b><svg><use href="#dimn"/></svg></b><b><svg><use href="#spin"/></svg></b>
    <b><svg><use href="#pl-t"/></svg></b><b><svg><use href="#ax-t"/></svg></b><b><svg><use href="#pts-t"/></svg></b><b class="sel"><svg><use href="#cs-t"/></svg></b><b class="sel"><svg><use href="#num"/></svg></b>
    </div><div class="gl">Show<svg class="c" width="8" height="5"><use href="#caret"/></svg></div></div>
  <div class="group g6"><div class="row">
    <div class="btn"><svg width="40" height="40" viewBox="0 0 40 40"><path d="M2 2H31V31H2Z" fill="url(#gPaper)" stroke="#aaa"/><path d="M1.500 3H31.500" stroke="#999" stroke-width="3"/><path d="M8 8H38V38H8Z" fill="url(#gPaper)" stroke="#307ea2" stroke-width="1.600"/><path d="M8 9.500H38" stroke="#307ea2" stroke-width="2.500"/><path d="M12 23Q16 23 19 28Q24 19 34 17Q25 23 20 34Q17 26 12 23Z" fill="#0f5c87"/></svg><span>Activate</span></div>
    <div class="btn"><svg width="40" height="40" viewBox="0 0 40 40"><path d="M3.500 6.500H11L20 16.500L29 6.500H36.500L24.500 20.500L36.500 33.500H29L20 24.500L11 33.500H3.500L15.500 20.500Z" fill="#fff" stroke="#777" stroke-width="1.400"/></svg><span>Close</span></div>
    <i class="vsep"></i>
    <div class="btn"><svg width="40" height="40" viewBox="0 0 40 40"><g fill="url(#gPaper)" stroke="#b5b5b5" stroke-width="1.300"><rect x="2" y="2.500" width="16" height="14"/><rect x="22" y="2.500" width="16" height="14"/><rect x="2" y="21" width="16" height="15"/></g><path d="M1.500 3H18.500M21.500 3H38.500M1.500 21.500H18.500" stroke="#a5a5a5" stroke-width="2"/><rect x="15" y="14" width="15.500" height="14" fill="url(#gPaper)" stroke="#2c7fa5" stroke-width="1.600"/></svg><span>Windows</span><svg class="c" width="8" height="5"><use href="#caret"/></svg></div>
    </div><div class="gl">Window<svg class="c" width="8" height="5"><use href="#caret"/></svg></div></div>
</section>

<main class="work">
  <aside class="side">
    <div class="tabs">
      <div class="tab on"><svg width="17" height="24"><use href="#tree"/></svg><span>Model Tree</span></div>
      <div class="tab t2"><svg width="24" height="24" viewBox="0 0 24 24"><use href="#folder" x="0" y="0" width="16" height="14"/><use href="#folder" x="3" y="4" width="16" height="14"/><use href="#folder" x="6" y="9" width="17" height="15"/></svg><span class="fade">Folder B</span></div>
      <div class="tab t3"><svg width="22" height="20" viewBox="0 0 20 18"><use href="#folder" width="20" height="18"/><path d="M10 6.500V15.500M5.500 11H14.500M7 8L13 14M13 8L7 14" stroke="#14618a" stroke-width="1"/><circle cx="10" cy="11" r="2" fill="#14618a"/></svg><span class="fade">Favorites</span></div>
    </div>
    <div class="thead"><b>Model Tree</b>
      <svg width="21" height="25" viewBox="0 0 21 25"><path d="M1 6Q4 0 13 2V6H9V8H5V5Z" fill="#666b70"/><path d="M4.500 7H9.500V24H4.500Z" fill="#d3a765" stroke="#9e7434"/><path d="M17.500 0V13" stroke="#777" stroke-width="2"/><path d="M15.500 13H19.500V24H15.500Z" fill="#d9ac64" stroke="#9e7434"/></svg>
      <svg width="8" height="5"><use href="#caret"/></svg>
      <svg width="20" height="25" viewBox="0 0 20 25"><path d="M.7 .7H13L19.300 7V24.300H.7Z" fill="url(#gSq)" stroke="#777"/><path d="M13 .7V7H19.300" fill="none" stroke="#777"/><path d="M4 10H6M4 15H6M4 20H6" stroke="#555" stroke-width="2"/><path d="M8 10H16M8 15H16M8 20H16" stroke="#666"/></svg>
      <svg width="8" height="5"><use href="#caret"/></svg>
      <svg width="26" height="25" viewBox="0 0 26 25"><g fill="#fff" stroke="#b5b5b5" stroke-width="1.400"><path d="M3.500 3V21M3.500 12H14M9 2H24V14M17 2V14" fill="none" stroke-dasharray="3 1"/><rect x="1" y="1" width="5" height="5"/><rect x="1" y="9.500" width="5" height="5"/><rect x="1" y="18" width="5" height="5"/><rect x="9" y="9.500" width="5" height="5"/></g><path d="M13 19Q19 12 26 19Q19 26 13 19Z" fill="#aaa"/><circle cx="19.500" cy="19" r="2" fill="#eee"/><path d="M13 13L26 25" stroke="#888"/></svg>
    </div>
    <div class="filter">
      <svg width="20" height="18" viewBox="0 0 20 18"><path d="M.8 .8H19.200L12 9V17.200H8V9Z" fill="url(#gPaper)" stroke="#777" stroke-width="1.300"/></svg>
      <div class="input"><svg width="10" height="10" viewBox="0 0 10 10"><path d="M.7 .7L9.300 9.300M9.300 .7L.7 9.300" stroke="#a2a6a8" stroke-width="1.700"/></svg></div>
      <svg width="8" height="5"><use href="#caret"/></svg>
      <svg width="14" height="14" viewBox="0 0 14 14"><path d="M7 0V14M0 7H14" stroke="#999c9e" stroke-width="4"/></svg>
    </div>
    <ul class="treelist">
      <li class="root"><svg width="17" height="16"><use href="#cube"/></svg>GEOMETRICMODELLINGSPOON.PRT</li>
      <li><svg><use href="#plane"/></svg>RIGHT</li>
      <li><svg><use href="#plane"/></svg>TOP</li>
      <li><svg><use href="#plane"/></svg>FRONT</li>
      <li class="off"><svg><use href="#csg"/></svg>PRT_CSYS_DEF</li>
      <li class="off"><svg><use href="#csg"/></svg>CS0</li>
      <li class="off"><svg><use href="#sketch"/></svg>Sketch 1</li>
      <li><svg><use href="#plane"/></svg>DTM1</li>
      <li><svg><use href="#plane"/></svg>DTM2</li>
      <li><svg><use href="#plane"/></svg>DTM3</li>
      <li><svg><use href="#plane"/></svg>DTM4</li>
      <li class="off"><svg><use href="#sketch"/></svg>Sketch 2</li>
      <li class="off"><svg><use href="#sketch"/></svg>Sketch 3</li>
      <li class="off"><svg><use href="#sketch"/></svg>Sketch 4</li>
      <li class="off"><svg><use href="#sketch"/></svg>Sketch 5</li>
      <li class="off"><svg><use href="#sketch"/></svg>Sketch 6</li>
      <li><svg viewBox="0 0 20 20"><path d="M7 1L19 1V12L8 19L7 14L1 11Z" fill="#d9dbdc" stroke="#19739d" stroke-width="1.600"/><path d="M4 11L16 2M6 13L18 5M8 15L18 9" stroke="#888"/><path d="M1 11L7 14L8 19" fill="none" stroke="#19739d" stroke-width="2"/></svg>Swept Blend 1(First Wall)</li>
      <li class="exp"><svg class="tri" viewBox="0 0 9 11"><path d="M0 0L9 5.500L0 11Z" fill="#808284"/></svg><svg viewBox="0 0 20 20"><path d="M1 8L8 1H19V12L12 19Z" fill="#b3e6f6"/><path d="M1 8L8 1H19L12 8Z" fill="#a9def0" stroke="#6fb1ce" stroke-width=".6"/><path d="M12 8L19 1V12L12 19Z" fill="#68aecb"/><rect x=".7" y="8" width="11" height="11.300" fill="#f6f6f6" stroke="#999"/><path d="M13 18L19 12V17Z" fill="#e0f6fc"/></svg>Extrude 1</li>
    </ul>
    <div class="insert"></div>
  </aside>
  <div class="canvas">
    <div class="float">
      <b><svg><use href="#refit"/></svg></b><b><svg><use href="#zin"/></svg></b><b><svg><use href="#zout"/></svg></b>
      <b><svg viewBox="0 0 20 20"><rect x=".6" y="1" width="18.800" height="18" fill="#b6dbea" stroke="#999"/><path d="M1 3H13Q13 12 4 18H1Z" fill="#fff"/><path d="M1 1.500H19" stroke="#888" stroke-width="2"/><path d="M4 18L18 8V19H4Z" fill="#8cc6dc"/><path d="M4 18L17 8" stroke="#145b80" stroke-width="2"/></svg></b>
      <b><svg><use href="#cube"/></svg></b><i><svg><use href="#corner"/></svg></i>
      <b><svg viewBox="0 0 20 20"><use href="#box" width="20" height="20"/><use href="#list" x="10" y="8" width="10" height="12"/></svg></b><i><svg><use href="#corner"/></svg></i>
      <b><svg><use href="#tablecam-s"/></svg></b><b><svg><use href="#boxarrow"/></svg></b>
      <b><svg viewBox="0 0 20 20"><use href="#boxarrow"/><path d="M7 0V5" stroke="#444" stroke-width="2"/><path d="M3.500 3H10.500L7 7Z" fill="#444"/></svg></b>
      <b class="sel"><svg><use href="#persp"/></svg></b>
      <b><svg viewBox="0 0 20 20"><path d="M0 1L5 6M5 1L0 6M4 19.500L12 0" stroke="#856432" stroke-width="1.600" stroke-dasharray="7 2"/><path d="M12 8V14H19M12 14L8 18M10 10L12 8L14 10M17 12L19 14L17 16" fill="none" stroke="#856432" stroke-width="1.500"/></svg></b><i><svg><use href="#corner"/></svg></i>
      <b><svg><use href="#pl-e"/></svg></b><b><svg><use href="#ax-e"/></svg></b><b><svg><use href="#pts-e"/></svg></b><b><svg><use href="#cs-e"/></svg></b><b><svg><use href="#spin"/></svg></b><b><svg><use href="#an-e"/></svg></b><i><svg><use href="#corner"/></svg></i>
      <b><svg><use href="#glass"/></svg></b>
      <b><svg viewBox="0 0 20 20"><path fill-rule="evenodd" d="M0 18L8.500 1H11.500L20 18ZM5.500 14.500H14.500L10 6Z" fill="#c5c7c9" stroke="#999" stroke-width=".8"/><circle cx="15.500" cy="15.500" r="4" fill="#ddd" stroke="#aaa"/><path d="M14 13L18 15.500L14 18Z" fill="#fff"/></svg></b>
      <b><svg viewBox="0 0 20 20"><path d="M0 2H20V16H2V12H5Q8 9 5 6H0Z" fill="#c4c6c8"/><path d="M12 4H19V14H12Z" fill="#dcddde"/></svg></b>
    </div>
    <svg class="spoon" width="270" height="340" viewBox="0 0 810 1020">
      <defs>
        <linearGradient id="hg" gradientUnits="userSpaceOnUse" x1="250" y1="620" x2="350" y2="690"><stop offset="0" stop-color="#8d8d8d"/><stop offset=".45" stop-color="#a2a2a2"/><stop offset="1" stop-color="#bdbdbd"/></linearGradient>
        <linearGradient id="he" gradientUnits="userSpaceOnUse" x1="90" y1="950" x2="210" y2="740"><stop offset=".2" stop-color="#a2a2a2"/><stop offset="1" stop-color="#a2a2a2" stop-opacity="0"/></linearGradient>
        <linearGradient id="hn" gradientUnits="userSpaceOnUse" x1="495" y1="360" x2="440" y2="470"><stop offset="0" stop-color="#999"/><stop offset="1" stop-color="#999" stop-opacity="0"/></linearGradient>
        <linearGradient id="bg" gradientUnits="userSpaceOnUse" x1="490" y1="160" x2="700" y2="310"><stop offset="0" stop-color="#797979"/><stop offset=".5" stop-color="#9a9a9a"/><stop offset="1" stop-color="#b8b8b8"/></linearGradient>
        <radialGradient id="hl" gradientUnits="userSpaceOnUse" cx="0" cy="0" r="1" gradientTransform="translate(650 240) rotate(-58) scale(105 78)"><stop offset="0" stop-color="#fff"/><stop offset=".15" stop-color="#fff" stop-opacity=".9"/><stop offset=".5" stop-color="#fff" stop-opacity=".3"/><stop offset="1" stop-color="#fff" stop-opacity="0"/></radialGradient>
        <path id="handle" d="M470 360L455 388L400 447L300 555Q215 655 160 735L60 885Q38 912 46 930Q52 940 85 965Q108 978 122 966L200 870Q300 745 400 580L480 440Q495 405 530 390V360Z"/>
        <path id="bowl" d="M690 54Q738 62 749 120Q748 190 730 240Q712 302 680 340Q640 386 570 384Q515 386 492 405Q475 395 467 360Q470 330 462 310Q448 270 450 240Q453 205 470 185Q500 145 550 112Q620 70 655 58Q675 52 690 54Z"/>
      </defs>
      <use href="#handle" fill="url(#hg)"/>
      <use href="#handle" fill="url(#he)"/>
      <path d="M470 360L455 388L400 447L300 555L400 580L480 440Q495 405 530 390V360Z" fill="url(#hn)"/>
      <use href="#bowl" fill="url(#bg)"/>
      <use href="#bowl" fill="url(#hl)"/>
      <path d="M505 358L685 115" stroke="#b5b5b5" stroke-width="4" opacity=".25"/>
      <path d="M457 385Q470 362 468 335Q466 315 458 295Q446 250 457 213Q465 187 500 150Q550 105 640 65Q675 53 705 57" fill="none" stroke="#a9abab" stroke-width="6"/>
      <path d="M455 388L400 447L300 555Q215 655 160 735L60 885" fill="none" stroke="#a3a5a5" stroke-width="3"/>
      <path d="M705 57Q744 72 748 120Q747 190 730 240Q712 302 680 340" fill="none" stroke="#5d6060" stroke-width="4"/>
      <path d="M690 327Q672 356 640 371Q605 386 555 385Q515 388 500 405" fill="none" stroke="#676a69" stroke-width="7"/>
      <path d="M500 405L480 440L400 580Q300 745 200 870L124 964" fill="none" stroke="#555" stroke-width="3" stroke-dasharray="9 3"/>
      <path d="M46 932Q52 942 85 967Q107 978 120 968" fill="none" stroke="#666" stroke-width="4"/>
    </svg>
  </div>
</main>

<footer class="status">
  <div class="sbox"><svg width="16" height="22"><use href="#tree"/></svg></div>
  <svg width="20" height="20" viewBox="0 0 20 20"><circle cx="10" cy="10.500" r="8.500" fill="#2a8fc7"/><path d="M5 5Q9 2 13 4L11 9L7 8ZM11 10L17 9L14 16L10 14Z" fill="#a9e3f7"/><ellipse cx="10" cy="10" rx="12" ry="5.500" transform="rotate(-45 10 10)" fill="none" stroke="#667" stroke-width="1.300"/></svg>
  <svg width="20" height="20" viewBox="0 0 20 20"><rect x=".8" y=".8" width="18.400" height="18.400" rx="1" fill="url(#gSq)" stroke="#2b7c9f" stroke-width="1.500"/></svg>
  <i class="ss"></i>
  <span class="msg"><i class="dot"></i>Spin Center will not be displayed.</span>
  <div class="sright">
    <i class="ss s2"></i>
    <svg class="lay" width="20" height="20" viewBox="0 0 20 20"><path d="M1 18L5 12H17L13 18Z" fill="#eee" stroke="#666"/><path d="M1 14.500L5 8.500H17L13 14.500Z" fill="#eee" stroke="#666"/><path d="M2 10L6 4H13V2L19 6.500L14 12V10Z" fill="#63bf55" stroke="#3d7d38"/></svg>
    <i class="ss"></i><i class="ss s3"></i>
    <div class="find"><span><svg width="22" height="20" viewBox="0 0 22 20"><path d="M4 2H9L10 6H12L13 2H18L22 14V19H13V12H9V19H0V14Z" fill="#3c4043"/><path d="M2 14L5 5M15 5L18 14" stroke="#999"/></svg></span><span><svg width="8" height="5"><use href="#caret"/></svg></span></div>
    <div class="combo"><span>Geometry</span><em><svg width="8" height="5"><use href="#caret"/></svg></em></div>
  </div>
</footer>
</body>
</html>
```
FILE: styles.css
```
* { box-sizing: border-box; }
body { margin: 0; width: 1920px; height: 1080px; overflow: hidden; display: flex; flex-direction: column; font: 15px/20px "Open Sans", "Noto Sans", sans-serif; color: #3f4244; background: #f8fafc; }
svg { display: block; flex: none; }
.sprite { position: absolute; width: 0; height: 0; }

.taskbar { height: 38px; flex: none; display: flex; background: #1e1c1c; color: #fff; }
.tb { width: 46px; height: 38px; display: flex; align-items: center; justify-content: center; border-top: 3px solid transparent; padding-bottom: 3px; }
.tb.sys { width: 45px; }
.tb.last { margin-right: 3px; }
.tb.sys:first-child { padding-right: 2px; }
.tb.open { border-image: linear-gradient(90deg, transparent 5px, #b2b2b2 5px, #b2b2b2 41px, transparent 41px) 3 0 0 0; }
.tb.active { background: #302e2e; border-top-color: #b2b2b2; }
.tray { margin-left: auto; width: 226px; display: flex; align-items: center; border-right: 1px solid #777; margin-right: 5px; }
.orange { margin-left: 21px; }
.lang { margin-left: 19px; width: 45px; letter-spacing: -.6px; }
.clock { width: 57px; letter-spacing: -.9px; }

.titlebar { height: 38px; flex: none; background: #dadfdf; padding-left: 15px; display: grid; align-items: center; grid-template-columns: 26px 63px 12px 33px 35px 34px 33px 23px 33px 22px 34px 34px 23px 26px 12px 119px 1239px 37px 38px auto; }
.titlebar .n { margin-left: 2px; }
.titlebar .dim { opacity: .4; }
.sep { width: 1px; height: 33px; background: #b4b9ba; }
.brand { font: 700 22px/24px "Lato", sans-serif; color: #676c6f; letter-spacing: .3px; padding-bottom: 3px; white-space: nowrap; }
.brand i { font: 7px/7px "Lato", sans-serif; vertical-align: 7px; }
.title { font-size: 17px; white-space: nowrap; letter-spacing: -.22px; color: #404446; }

.menu { height: 39px; flex: none; display: flex; background: #3e4646; color: #fff; font-size: 17px; line-height: 39px; letter-spacing: -.4px; }
.menu > span { text-align: center; width: 106px; white-space: nowrap; }
.menu > .file { width: 79px; background: linear-gradient(160deg, #69d245, #4fa637); }
.menu > span:nth-child(2) { width: 107px; }
.menu > span:nth-child(3) { width: 125px; }
.menu > span:nth-child(4) { width: 171px; }
.menu > span:nth-child(5) { width: 137px; }
.menu > span:nth-child(6) { width: 97px; padding-right: 3px; }
.menu > .on { width: 97px; background: #f8fafc; color: #4c9c2e; }
.menu > span:nth-child(8) { width: 192px; }
.menu > span:nth-child(9) { width: 156px; }
.mright { margin-left: auto; width: 146px; display: grid; align-items: center; grid-template-columns: 30px 35px 31px 22px 20px; }
.mright svg:first-child { margin-bottom: 7px; }
.white { filter: brightness(0) invert(1); }
.help { font-weight: 700; font-size: 16px; width: 18px; height: 18px; line-height: 18px; border-radius: 9px; background: #333; text-align: center; }

.ribbon { height: 148px; flex: none; display: flex; border-bottom: 2px solid #b3bfc2; background: #f8fafc; padding-top: 3px; }
.group { height: 142px; border-right: 1px solid #adb1b3; }
.row { display: grid; height: 116px; }
.g1 { width: 163px; } .g1 .row { grid-template-columns: 61px 101px; }
.g2 { width: 166px; } .g2 .row { grid-template-columns: 65px 93px; }
.g3 { width: 588px; } .g3 .row { grid-template-columns: 60px 66px 76px 110px 1px 118px 78px 78px; }
.g4 { width: 289px; } .g4 .row { grid-template-columns: 69px 62px 66px 88px; }
.g5 { width: 177px; } .g6 { width: 217px; } .g6 .row { grid-template-columns: 74px 49px 8px 85px; }
.btn { display: flex; flex-direction: column; align-items: center; padding-top: 6px; text-align: center; white-space: nowrap; letter-spacing: -.22px; }
.btn > svg:first-child { margin-bottom: 15px; }
.btn > .c { margin-top: 7px; }
.btn span .c, .gl .c { display: inline-block; vertical-align: 3px; margin-left: 4px; }
.disp { padding-left: 3px; }
.off { color: #adb0b2; }
.sel { background: #dfe1e3; border: 1px solid #b0b4b6; }
.btn.sel { height: 109px; margin-top: -1px; }
.vsep { background: #b8bbbd; width: 1px; height: 97px; margin-top: 5px; }
.g6 .vsep { margin-left: 7px; }
.stack { display: flex; flex-direction: column; padding: 6px 0 0 4px; gap: 17px; white-space: nowrap; letter-spacing: -.25px; }
.stack > div { display: flex; align-items: center; height: 19.500px; }
.stack > div > svg:first-child { margin-right: 5px; }
.far { margin-left: 13px; } .far2 { margin-left: 13px; }
.gl { text-align: center; padding-top: 1px; letter-spacing: -.2px; }
.cells { grid-template-columns: repeat(5, 34px); grid-template-rows: 34px 34px 34px; row-gap: 2.500px; padding-left: 3px; margin-top: -1px; height: 117px; }
.cells b { display: flex; align-items: center; justify-content: center; }
.cells svg, .float b svg { width: 20px; height: 20px; }

.work { flex: 1; display: flex; min-height: 0; }
.side { width: 348px; border-right: 3px solid #dadfe0; background: #f8fafc; }
.tabs { display: flex; height: 41px; background: #dadfe0; }
.tab { display: flex; align-items: center; overflow: hidden; white-space: nowrap; letter-spacing: -.2px; }
.tab > span { padding-bottom: 2px; }
.tab.on { width: 128px; background: #f8fafc; padding-left: 14px; gap: 9px; }
.t2 { width: 109px; padding-left: 11px; gap: 5px; }
.t3 { padding-left: 11px; gap: 6px; width: 104px; letter-spacing: -.4px; }
.fade { -webkit-mask: linear-gradient(90deg, #000 78%, rgba(0,0,0,.25)); mask: linear-gradient(90deg, #000 78%, rgba(0,0,0,.25)); }
.thead { height: 39px; padding-left: 35px; display: grid; align-items: center; grid-template-columns: 145px 38px 25px 35px 28px 26px; letter-spacing: -.5px; }
.thead b { padding-bottom: 2px; }
.filter { height: 38px; display: flex; align-items: center; padding-left: 16px; }
.input { width: 237px; height: 38px; margin: 0 9px 0 6px; border: 1px solid #a5b3b3; background: #fff; display: flex; align-items: center; justify-content: flex-end; padding-right: 8px; }
.filter > svg:last-child { margin-left: 19px; margin-bottom: 2px; }
.treelist { list-style: none; margin: 11px 0 0; padding: 0; font-size: 13px; letter-spacing: -.28px; }
.treelist li { height: 28px; display: flex; align-items: center; padding-left: 38px; gap: 6px; color: #4a4a4c; }
.treelist li svg { width: 20px; height: 20px; }
.treelist li.root { padding-left: 14px; gap: 8px; letter-spacing: -.33px; }
.treelist li.root svg { width: 17px; height: 16px; }
.treelist li.exp { padding-left: 20px; gap: 6px; }
.treelist li svg.tri { width: 9px; height: 11px; margin-right: 3px; }
.treelist li.off { color: #bcbec0; }
.insert { height: 3px; margin: 9px 6px 0 10px; background: #64c544; }
.canvas { flex: 1; background: #e9ebee; position: relative; }
.float { margin: 7px 0 0 411px; width: 750px; height: 42px; border: 1px solid #a2a6a8; background: #f8fafc; display: flex; align-items: center; padding-left: 2px; }
.float b { flex: none; width: 36px; height: 33px; display: flex; align-items: center; justify-content: center; }
.float b.sel { width: 33px; margin: 0 1px 0 2px; }
.float i { flex: none; width: 7px; height: 30px; display: flex; align-items: flex-end; justify-content: flex-start; margin-left: -1px; }
.float i svg { width: 4px; height: 4px; }
.spoon { position: absolute; left: 822px; top: 177px; }

.status { height: 51px; flex: none; border-top: 1px solid #b3bfc2; background: #f7fbfb; display: flex; align-items: center; padding: 10px 21px 0 7px; font-size: 13px; }
.sbox { width: 30px; height: 30px; border: 1px solid #adb1b3; background: #dfe1e3; display: flex; align-items: center; padding-left: 10px; margin-right: 9px; }
.status > svg + svg { margin-left: 14px; }
.ss { flex: none; width: 1px; height: 32px; background: #b4babc; margin-left: 15px; }
.msg { margin-left: 9px; display: flex; align-items: center; gap: 6px; padding-bottom: 6px; letter-spacing: -.18px; }
.dot { width: 6px; height: 6px; border-radius: 3px; background: #14618a; margin-bottom: 4px; }
.sright { margin-left: auto; width: 515px; display: flex; align-items: center; padding-bottom: 4px; }
.s2 { margin-left: 0; }
.lay { margin-left: 2px; }
.lay + .ss { margin-left: 36px; }
.s3 { margin-left: 49px; }
.find { display: flex; width: 64px; height: 34px; border: 1px solid #b4babc; border-left: 0; }
.find span { display: flex; align-items: center; justify-content: center; flex: 1; }
.find span:first-child { flex: 0 0 39px; padding-left: 3px; background: #f3f4f6; border-right: 1px solid #b4babc; }
.combo { margin-left: auto; width: 222px; height: 32px; border: 1px solid #a5abad; background: #f8fafc; display: flex; align-items: center; font-size: 15px; letter-spacing: -.35px; padding-left: 10px; }
.combo em { margin-left: auto; width: 25px; height: 30px; border-left: 1px solid #a5abad; display: flex; align-items: center; justify-content: center; }
```
